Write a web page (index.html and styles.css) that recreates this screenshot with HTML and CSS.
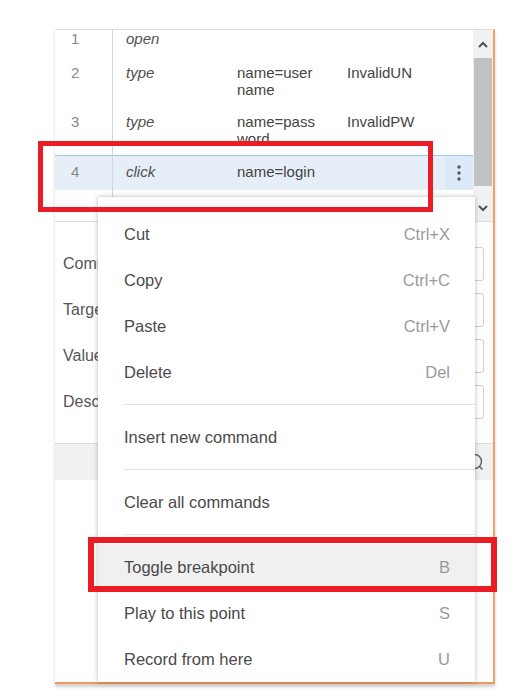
FILE: index.html
```html
<!DOCTYPE html>
<html>
<head>
<meta charset="utf-8">
<link rel="stylesheet" href="styles.css">
</head>
<body>
<div class="stage">
  <div class="panel">
    <div class="table">
      <div class="rows">
        <div class="row r1">
          <div class="c-num">1</div><div class="c-cmd">open</div><div class="c-tgt"></div><div class="c-val"></div><div class="c-act"></div>
        </div>
        <div class="row r2">
          <div class="c-num">2</div><div class="c-cmd">type</div><div class="c-tgt"><span class="wrap">name=username</span></div><div class="c-val">InvalidUN</div><div class="c-act"></div>
        </div>
        <div class="row r3">
          <div class="c-num">3</div><div class="c-cmd">type</div><div class="c-tgt"><span class="wrap">name=password</span></div><div class="c-val">InvalidPW</div><div class="c-act"></div>
        </div>
        <div class="row r4 selected">
          <div class="c-num">4</div><div class="c-cmd">click</div><div class="c-tgt"><span class="wrap">name=login</span></div><div class="c-val"></div>
          <div class="c-act"><svg width="6" height="18" viewBox="0 0 6 18"><circle cx="3" cy="3" r="1.7" fill="#555"/><circle cx="3" cy="9" r="1.7" fill="#555"/><circle cx="3" cy="15" r="1.7" fill="#555"/></svg></div>
        </div>
        <div class="row r5">
          <div class="c-num"></div><div class="c-cmd"></div><div class="c-tgt"></div><div class="c-val"></div><div class="c-act"></div>
        </div>
      </div>
      <div class="scrollbar">
        <div class="sb-btn"><svg width="10" height="7" viewBox="0 0 10 7"><path d="M1 6 L5 2 L9 6" fill="none" stroke="#505050" stroke-width="2"/></svg></div>
        <div class="sb-thumb"></div>
        <div class="sb-track"></div>
        <div class="sb-btn"><svg width="10" height="7" viewBox="0 0 10 7"><path d="M1 1 L5 5 L9 1" fill="none" stroke="#505050" stroke-width="2"/></svg></div>
      </div>
    </div>
    <div class="form">
      <div class="frow"><span class="flabel">Command</span><div class="finput"></div></div>
      <div class="frow"><span class="flabel">Target</span><div class="finput"></div></div>
      <div class="frow"><span class="flabel">Value</span><div class="finput"></div></div>
      <div class="frow"><span class="flabel">Description</span><div class="finput"></div></div>
    </div>
    <div class="footer">
      <svg width="18" height="18" viewBox="0 0 18 18"><circle cx="8.5" cy="8.5" r="7" fill="none" stroke="#666" stroke-width="1.5"/><path d="M13.5 13.5 L16.5 16.5" stroke="#666" stroke-width="1.5"/></svg>
    </div>
    <div class="blank"></div>
  </div>

  <div class="menu">
    <div class="item"><span>Cut</span><span class="key">Ctrl+X</span></div>
    <div class="item"><span>Copy</span><span class="key">Ctrl+C</span></div>
    <div class="item"><span>Paste</span><span class="key">Ctrl+V</span></div>
    <div class="item"><span>Delete</span><span class="key">Del</span></div>
    <div class="sep"></div>
    <div class="item"><span>Insert new command</span></div>
    <div class="sep"></div>
    <div class="item"><span>Clear all commands</span></div>
    <div class="sep"></div>
    <div class="item hover"><span>Toggle breakpoint</span><span class="key">B</span></div>
    <div class="item"><span>Play to this point</span><span class="key">S</span></div>
    <div class="item"><span>Record from here</span><span class="key">U</span></div>
  </div>

  <div class="mark mark1"></div>
  <div class="mark mark2"></div>
</div>
</body>
</html>
```
FILE: styles.css
```css
* { box-sizing: border-box; }
html, body { margin: 0; padding: 0; background: #fff; }
body { font-family: "Liberation Sans", Arial, sans-serif; width: 516px; height: 698px; overflow: hidden; }

.stage { position: relative; width: 516px; height: 698px; padding: 29px 0 0 55px; }

.panel {
  width: 440px;
  height: 655px;
  border-top: 1px solid #dcdcdc;
  border-right: 2px solid #f5a066;
  border-bottom: 2px solid #f5965a;
  box-shadow: 0 3px 3px rgba(0,0,0,0.18);
  display: flex;
  flex-direction: column;
  background: #fff;
}

.table {
  height: 192px;
  flex: none;
  display: flex;
  border-bottom: 1px solid #dcdcdc;
  overflow: hidden;
}
.rows { width: 418px; margin-top: -7px; }
.row {
  display: grid;
  grid-template-columns: 58px 124px 110px 98px 28px;
  font-size: 15px;
  line-height: 17px;
  color: #444;
}
.row > div { padding-top: 7px; }
.r1 { height: 34px; }
.r2, .r3 { height: 49px; }
.r4 { height: 35px; }
.r5 { height: 50px; }
.c-num { border-right: 1px solid #d6d6d6; padding-left: 16px; color: #888; }
.c-cmd { padding-left: 13px; font-style: italic; color: #505050; }
.c-tgt .wrap { display: block; width: 80px; word-break: break-all; }
.selected { border-top: 1px solid #9cc8ef; background: #e6eef7; }
.selected > div { padding-top: 7px; }
.selected .c-act { background: #dbe9f9; display: flex; justify-content: center; padding-top: 8px; }

.scrollbar { width: 20px; background: #f1f1f1; display: flex; flex-direction: column; }
.sb-btn { height: 28px; display: flex; align-items: center; justify-content: center; }
.sb-btn:last-child { height: 25px; }
.sb-thumb { height: 128px; background: #c1c1c1; margin: 0 1px; }
.sb-track { flex: 1; }

.form {
  height: 221px;
  flex: none;
  padding-top: 25px;
  display: flex;
  flex-direction: column;
  gap: 12px;
}
.frow { display: flex; align-items: center; height: 34px; }
.flabel { width: 105px; padding-left: 8px; font-size: 16px; color: #555; white-space: nowrap; }
.finput { flex: 1; height: 34px; margin-right: 9px; border: 1px solid #d0d0d0; border-radius: 3px; }

.footer {
  height: 37px;
  flex: none;
  background: #f1f1f1;
  border-top: 1px solid #dcdcdc;
  display: flex;
  align-items: center;
  justify-content: flex-end;
  padding-right: 9px;
}
.blank { flex: 1; }

.menu {
  position: absolute;
  left: 98px;
  top: 197px;
  width: 377px;
  height: 485px;
  background: #fff;
  padding-top: 14px;
  box-shadow: 0 0 5px rgba(0,0,0,0.28);
  font-size: 16.5px;
  color: #4a4a4a;
}
.item {
  height: 46px;
  display: flex;
  align-items: center;
  justify-content: space-between;
  padding: 1px 25px 0 26px;
}
.item .key { color: #9a9a9a; }
.item.hover { background: #f0f0f0; }
.sep { height: 1px; background: #e2e2e2; margin: 9px 0 9px 26px; }

.mark { position: absolute; border: 5px solid #ec1c24; }
.mark1 { left: 38px; top: 141px; width: 395px; height: 71px; }
.mark2 { left: 88px; top: 537px; width: 409px; height: 55px; border-width: 6px; }
```
